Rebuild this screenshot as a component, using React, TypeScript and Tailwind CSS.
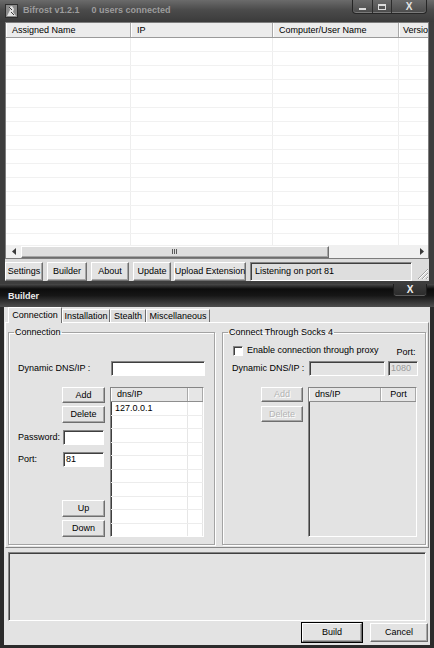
import React from "react";

const raised =
  "border border-t-white border-l-white border-r-[#6e6e6e] border-b-[#6e6e6e] shadow-[inset_-1px_-1px_0_#a6a6a6]";
const sunken =
  "border border-t-[#858585] border-l-[#858585] border-r-white border-b-white shadow-[inset_1px_1px_0_#3f3f3f]";

type BtnProps = {
  label: string;
  className?: string;
  disabled?: boolean;
  primary?: boolean;
};

const Btn: React.FC<BtnProps> = ({ label, className = "", disabled = false, primary = false }) => (
  <div
    className={`flex shrink-0 items-center justify-center whitespace-nowrap bg-[#e3e3e3] leading-none ${raised} ${
      primary ? "outline outline-1 outline-black" : ""
    } ${disabled ? "text-[#b4b4b4] [text-shadow:1px_1px_0_#ffffff]" : "text-black"} ${className}`}
  >
    {label}
  </div>
);

const Field: React.FC<{ value?: string; className?: string; disabled?: boolean }> = ({
  value = "",
  className = "",
  disabled = false,
}) => (
  <div
    className={`flex shrink-0 items-center pl-[2px] leading-none ${sunken} ${
      disabled ? "bg-[#e3e3e3] text-[#9a9a9a]" : "bg-white text-black"
    } ${className}`}
  >
    {value}
  </div>
);

const HeaderCell: React.FC<{ label: string; className?: string }> = ({ label, className = "" }) => (
  <div
    className={`flex h-full shrink-0 items-center overflow-hidden whitespace-nowrap border-r border-r-[#a9a9a9] border-l border-l-white pl-[5px] ${className}`}
  >
    {label}
  </div>
);

const mainColumns = [
  { label: "Assigned Name", w: "w-[125px]" },
  { label: "IP", w: "w-[142px]" },
  { label: "Computer/User Name", w: "w-[126px]" },
  { label: "Versio", w: "w-[31px] !pl-[3px] !border-r-0" },
];

const TitleIcon = () => (
  <svg width="13" height="14" viewBox="0 0 13 14">
    <rect x="0.5" y="0.5" width="12" height="13" fill="#8a8a8a" stroke="#2e2e2e" />
    <path d="M2 12 L5 6 L4 3 L7 2 L9 5 L8 8 L11 12 Z" fill="#e2e2e2" />
    <path d="M4 3 L7 6 M6 8 L9 11" stroke="#3a3a3a" strokeWidth="1" />
  </svg>
);

const Arrow = ({ dir }: { dir: "left" | "right" }) => (
  <svg width="4" height="7" viewBox="0 0 4 7">
    <path d={dir === "left" ? "M4 0 L0 3.5 L4 7 Z" : "M0 0 L4 3.5 L0 7 Z"} fill="#3a3a3a" />
  </svg>
);

const ResizeGrip = () => (
  <svg width="13" height="13" viewBox="0 0 13 13">
    <path d="M12 2 L2 12 M12 6 L6 12 M12 10 L10 12" stroke="#a0a0a0" strokeWidth="1" />
    <path d="M12 3 L3 12 M12 7 L7 12 M12 11 L11 12" stroke="#ffffff" strokeWidth="1" />
  </svg>
);

const BifrostWindow = () => (
  <div className="flex h-[284px] flex-col bg-[#3d3d3d]">
    {/* caption */}
    <div className="flex h-[22px] shrink-0 items-start bg-[linear-gradient(to_bottom,#6b6b6b,#4b4b4b_45%,#3b3b3b)]">
      <div className="ml-[5px] mt-[4px]">
        <TitleIcon />
      </div>
      <div className="ml-[5px] mt-[6px] flex gap-[12px] text-[9px] font-bold leading-none text-[#9d9d9d]">
        <span>Bifrost v1.2.1</span>
        <span>0 users connected</span>
      </div>
      <div className="ml-auto mr-[7px] flex h-[14px] overflow-hidden rounded-b-[4px] border border-t-0 border-[#262626] bg-[linear-gradient(to_bottom,#6a6a6a,#4a4a4a)] shadow-[inset_0_-1px_0_#7a7a7a]">
        <div className="flex w-[20px] items-end justify-center border-r border-r-[#2c2c2c] pb-[3px]">
          <div className="h-[2px] w-[7px] bg-[#dcdcdc]" />
        </div>
        <div className="flex w-[19px] items-center justify-center border-r border-r-[#2c2c2c]">
          <div className="h-[6px] w-[8px] border border-t-2 border-[#dcdcdc]" />
        </div>
        <div className="flex w-[34px] items-center justify-center text-[10px] font-bold leading-none text-[#e4e4e4]">
          X
        </div>
      </div>
    </div>

    {/* client */}
    <div className="mx-[5px] flex h-[259px] flex-col bg-[#dcdcdc]">
      <div className="flex h-[237px] flex-col overflow-hidden border border-[#7d7d7d] bg-white text-[9px] text-black">
        <div className="flex h-[15px] shrink-0 border-b border-b-[#9a9a9a] bg-[#ececec] leading-none">
          {mainColumns.map((c) => (
            <HeaderCell key={c.label} label={c.label} className={c.w} />
          ))}
        </div>
        <div className="flex-1 overflow-hidden">
          {Array.from({ length: 16 }).map((_, i) => (
            <div key={i} className="flex h-[14px] border-b border-b-[#f1f1f1]">
              {mainColumns.map((c) => (
                <div key={c.label} className={`h-full shrink-0 border-r border-r-[#eeeeee] ${c.w}`} />
              ))}
            </div>
          ))}
        </div>
        {/* horizontal scrollbar */}
        <div className="flex h-[13px] shrink-0 items-center bg-[#f0f0f0]">
          <div className="flex w-[15px] items-center justify-center">
            <Arrow dir="left" />
          </div>
          <div
            className={`flex h-[12px] w-[308px] items-center justify-center bg-[#dedede] ${raised}`}
          >
            <svg width="6" height="5" viewBox="0 0 6 5">
              <path d="M0.5 0 V5 M2.5 0 V5 M4.5 0 V5" stroke="#5a5a5a" strokeWidth="1" />
            </svg>
          </div>
          <div className="flex-1" />
          <div className="flex w-[13px] items-center justify-center">
            <Arrow dir="right" />
          </div>
        </div>
      </div>

      {/* toolbar */}
      <div className="flex h-[22px] items-start gap-[4px] pt-[3px] text-[9px]">
        <Btn label="Settings" className="h-[19px] w-[38px]" />
        <Btn label="Builder" className="h-[19px] w-[40px]" />
        <Btn label="About" className="h-[19px] w-[38px]" />
        <Btn label="Update" className="h-[19px] w-[38px]" />
        <Btn label="Upload Extension" className="-ml-[1px] h-[19px] w-[72px]" />
        <div
          className={`flex h-[19px] w-[162px] items-center bg-[#dedede] pl-[4px] leading-none text-black ${sunken}`}
        >
          Listening on port 81
        </div>
        <div className="ml-auto mt-[5px]">
          <ResizeGrip />
        </div>
      </div>
    </div>
  </div>
);

const SmallList: React.FC<{
  cols: { label: string; w: string }[];
  rows?: string[];
  disabled?: boolean;
  className?: string;
}> = ({ cols, rows = [], disabled = false, className = "" }) => (
  <div
    className={`flex h-[150px] shrink-0 flex-col overflow-hidden ${sunken} ${
      disabled ? "bg-[#e3e3e3]" : "bg-white"
    } ${className}`}
  >
    <div className="flex h-[14px] shrink-0 border-b border-b-[#8e8e8e] bg-[#e6e6e6] leading-none">
      {cols.map((c) => (
        <HeaderCell key={c.label} label={c.label} className={c.w} />
      ))}
    </div>
    {!disabled && (
      <div className="flex-1 overflow-hidden">
        {Array.from({ length: 11 }).map((_, i) => (
          <div key={i} className="flex h-[13.5px] border-b border-b-[#ececec]">
            {cols.map((c, ci) => (
              <div
                key={c.label}
                className={`flex h-full shrink-0 items-center border-r border-r-[#e6e6e6] pl-[4px] leading-none ${c.w}`}
              >
                {ci === 0 ? rows[i] ?? "" : ""}
              </div>
            ))}
          </div>
        ))}
      </div>
    )}
  </div>
);

const GroupBox: React.FC<{ title: string; className?: string; children: React.ReactNode }> = ({
  title,
  className = "",
  children,
}) => (
  <fieldset
    className={`h-full border border-[#a3a3a3] shadow-[inset_1px_1px_0_#ffffff,1px_1px_0_#ffffff] ${className}`}
  >
    <legend className="-ml-[4px] px-[1px] leading-none">{title}</legend>
    {children}
  </fieldset>
);

const Tab: React.FC<{ label: string; active?: boolean; className?: string }> = ({
  label,
  active = false,
  className = "",
}) => (
  <div
    className={`flex items-center justify-center border-l border-t border-r border-l-white border-t-white border-r-[#6e6e6e] leading-none ${
      active ? "relative z-10 -mb-[1px] h-[16px] bg-[#e3e3e3]" : "h-[13px] bg-[#dedede]"
    } ${className}`}
  >
    {label}
  </div>
);

const BuilderWindow = () => (
  <div className="flex h-[364px] flex-col bg-[#2b2b2b]">
    {/* caption */}
    <div className="flex h-[23px] shrink-0 items-start bg-[linear-gradient(to_bottom,#4a4a4a_0%,#0c0c0c_22%,#161616_50%,#4e4e4e_100%)]">
      <span className="ml-[8px] mt-[8px] text-[9px] font-bold leading-none text-[#ececec]">Builder</span>
      <div className="ml-auto mr-[7px] flex h-[13px] w-[34px] items-center justify-center rounded-b-[3px] border border-t-0 border-[#1d1d1d] bg-[linear-gradient(to_bottom,#3c3c3c,#2a2a2a)] text-[10px] font-bold leading-none text-[#f0f0f0] shadow-[inset_0_-1px_0_#5c5c5c]">
        X
      </div>
    </div>

    {/* client */}
    <div className="mx-[4px] flex h-[338px] flex-col bg-[#e3e3e3] text-[9px] text-black">
      <div className="flex h-[15px] shrink-0 items-end pl-[4px]">
        <Tab label="Connection" active className="w-[54px]" />
        <Tab label="Installation" className="w-[48px]" />
        <Tab label="Stealth" className="w-[36px]" />
        <Tab label="Miscellaneous" className="w-[64px]" />
      </div>

      <div className="mx-[1px] flex h-[226px] shrink-0 gap-[7px] border border-t-white border-l-white border-r-[#868686] border-b-[#868686] px-[2px] pb-[2px] pt-[5px]">
        {/* left group */}
        <GroupBox title="Connection" className="w-[207px] pl-[9px]">
          <div className="mt-[24px] flex h-[15px] items-center">
            <span className="w-[93px] leading-none">Dynamic DNS/IP :</span>
            <Field className="h-[15px] w-[94px]" />
          </div>
          <div className="mt-[11px] flex">
            <div className="flex h-[150px] w-[92px] flex-col items-end pr-[5px]">
              <Btn label="Add" className="h-[16px] w-[43px]" />
              <Btn label="Delete" className="mt-[3px] h-[17px] w-[43px]" />
              <div className="mt-[7px] flex h-[15px] w-full items-center">
                <span className="flex-1 leading-none">Password:</span>
                <Field className="mr-[1px] h-[15px] w-[41px]" />
              </div>
              <div className="mt-[7px] flex h-[15px] w-full items-center">
                <span className="flex-1 leading-none">Port:</span>
                <Field value="81" className="mr-[1px] h-[15px] w-[41px]" />
              </div>
              <div className="flex-1" />
              <Btn label="Up" className="h-[17px] w-[43px]" />
              <Btn label="Down" className="mt-[3px] h-[17px] w-[43px]" />
            </div>
            <SmallList
              className="w-[94px]"
              cols={[
                { label: "dns/IP", w: "w-[77px]" },
                { label: "", w: "w-[15px]" },
              ]}
              rows={["127.0.0.1"]}
            />
          </div>
        </GroupBox>

        {/* right group */}
        <GroupBox title="Connect Through Socks 4" className="flex-1 pl-[9px]">
          <div className="mt-[8px] flex h-[11px] items-center">
            <div className={`ml-[1px] h-[10px] w-[10px] bg-white ${sunken}`} />
            <span className="ml-[4px] leading-none">Enable connection through proxy</span>
            <span className="ml-[18px] mt-[3px] leading-none">Port:</span>
          </div>
          <div className="mt-[5px] flex h-[15px] items-center">
            <span className="w-[77px] leading-none">Dynamic DNS/IP :</span>
            <Field disabled className="h-[15px] w-[76px]" />
            <Field disabled value="1080" className="ml-[3px] h-[15px] w-[30px]" />
          </div>
          <div className="mt-[11px] flex">
            <div className="flex w-[76px] flex-col items-end pr-[5px]">
              <Btn label="Add" disabled className="h-[15px] w-[42px]" />
              <Btn label="Delete" disabled className="mt-[4px] h-[16px] w-[42px]" />
            </div>
            <SmallList
              disabled
              className="w-[109px]"
              cols={[
                { label: "dns/IP", w: "w-[72px]" },
                { label: "Port", w: "w-[35px] justify-center !pl-0" },
              ]}
            />
          </div>
        </GroupBox>
      </div>

      {/* output area */}
      <div className={`mx-[4px] mt-[4px] h-[69px] shrink-0 bg-[#e3e3e3] ${sunken}`} />

      <div className="mt-[2px] flex justify-end gap-[8px] pr-[2px]">
        <Btn label="Build" primary className="h-[19px] w-[60px]" />
        <Btn label="Cancel" className="h-[19px] w-[58px]" />
      </div>
    </div>
  </div>
);

export default function App() {
  return (
    <div className="h-[648px] w-[434px] overflow-hidden bg-[#2b2b2b] font-['Liberation_Sans',Arial,sans-serif]">
      <BifrostWindow />
      <BuilderWindow />
    </div>
  );
}
